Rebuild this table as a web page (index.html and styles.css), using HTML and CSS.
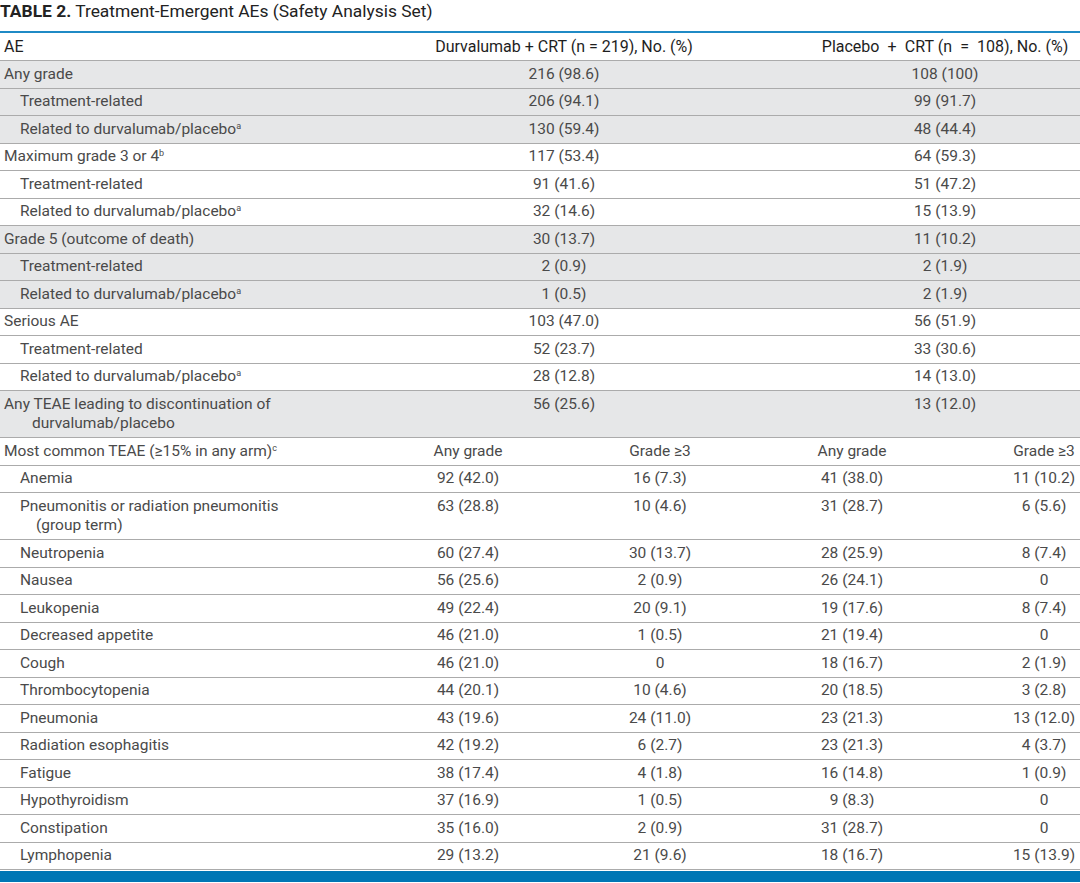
FILE: index.html
```html
<!DOCTYPE html>
<html lang="en">
<head>
<meta charset="utf-8">
<title>Treatment-Emergent AEs</title>
<link rel="stylesheet" href="styles.css">
</head>
<body>
<div class="page">
  <div class="caption"><span class="cap-label">TABLE 2.</span> Treatment-Emergent AEs (Safety Analysis Set)</div>
  <table class="ae-table">
    <colgroup>
      <col class="c-label">
      <col class="c-d1">
      <col class="c-d2">
      <col class="c-p1">
      <col class="c-p2">
    </colgroup>
    <thead>
      <tr>
        <th class="lbl">AE</th>
        <th colspan="2" class="num">Durvalumab + CRT (n = 219), No. (%)</th>
        <th colspan="2" class="num span-p">Placebo&ensp;+&ensp;CRT (n&ensp;=&ensp;108), No. (%)</th>
      </tr>
    </thead>
    <tbody>
      <tr class="shade">
        <td class="lbl">Any grade</td>
        <td colspan="2" class="num">216 (98.6)</td>
        <td colspan="2" class="num span-p">108 (100)</td>
      </tr>
      <tr class="shade">
        <td class="lbl ind">Treatment-related</td>
        <td colspan="2" class="num">206 (94.1)</td>
        <td colspan="2" class="num span-p">99 (91.7)</td>
      </tr>
      <tr class="shade">
        <td class="lbl ind">Related to durvalumab/placebo<sup>a</sup></td>
        <td colspan="2" class="num">130 (59.4)</td>
        <td colspan="2" class="num span-p">48 (44.4)</td>
      </tr>
      <tr>
        <td class="lbl">Maximum grade 3 or 4<sup>b</sup></td>
        <td colspan="2" class="num">117 (53.4)</td>
        <td colspan="2" class="num span-p">64 (59.3)</td>
      </tr>
      <tr>
        <td class="lbl ind">Treatment-related</td>
        <td colspan="2" class="num">91 (41.6)</td>
        <td colspan="2" class="num span-p">51 (47.2)</td>
      </tr>
      <tr>
        <td class="lbl ind">Related to durvalumab/placebo<sup>a</sup></td>
        <td colspan="2" class="num">32 (14.6)</td>
        <td colspan="2" class="num span-p">15 (13.9)</td>
      </tr>
      <tr class="shade">
        <td class="lbl">Grade 5 (outcome of death)</td>
        <td colspan="2" class="num">30 (13.7)</td>
        <td colspan="2" class="num span-p">11 (10.2)</td>
      </tr>
      <tr class="shade">
        <td class="lbl ind">Treatment-related</td>
        <td colspan="2" class="num">2 (0.9)</td>
        <td colspan="2" class="num span-p">2 (1.9)</td>
      </tr>
      <tr class="shade">
        <td class="lbl ind">Related to durvalumab/placebo<sup>a</sup></td>
        <td colspan="2" class="num">1 (0.5)</td>
        <td colspan="2" class="num span-p">2 (1.9)</td>
      </tr>
      <tr>
        <td class="lbl">Serious AE</td>
        <td colspan="2" class="num">103 (47.0)</td>
        <td colspan="2" class="num span-p">56 (51.9)</td>
      </tr>
      <tr>
        <td class="lbl ind">Treatment-related</td>
        <td colspan="2" class="num">52 (23.7)</td>
        <td colspan="2" class="num span-p">33 (30.6)</td>
      </tr>
      <tr>
        <td class="lbl ind">Related to durvalumab/placebo<sup>a</sup></td>
        <td colspan="2" class="num">28 (12.8)</td>
        <td colspan="2" class="num span-p">14 (13.0)</td>
      </tr>
      <tr class="shade">
        <td class="lbl hang">Any TEAE leading to discontinuation of <span class="nw">durvalumab/placebo</span></td>
        <td colspan="2" class="num">56 (25.6)</td>
        <td colspan="2" class="num span-p">13 (12.0)</td>
      </tr>
      <tr>
        <td class="lbl">Most common TEAE (≥15% in any arm)<sup>c</sup></td>
        <td class="num">Any grade</td>
        <td class="num">Grade ≥3</td>
        <td class="num">Any grade</td>
        <td class="num last">Grade ≥3</td>
      </tr>
      <tr>
        <td class="lbl ind">Anemia</td>
        <td class="num">92 (42.0)</td>
        <td class="num">16 (7.3)</td>
        <td class="num">41 (38.0)</td>
        <td class="num last">11 (10.2)</td>
      </tr>
      <tr>
        <td class="lbl hang-ind">Pneumonitis or radiation pneumonitis <span class="nw">(group term)</span></td>
        <td class="num">63 (28.8)</td>
        <td class="num">10 (4.6)</td>
        <td class="num">31 (28.7)</td>
        <td class="num last">6 (5.6)</td>
      </tr>
      <tr>
        <td class="lbl ind">Neutropenia</td>
        <td class="num">60 (27.4)</td>
        <td class="num">30 (13.7)</td>
        <td class="num">28 (25.9)</td>
        <td class="num last">8 (7.4)</td>
      </tr>
      <tr>
        <td class="lbl ind">Nausea</td>
        <td class="num">56 (25.6)</td>
        <td class="num">2 (0.9)</td>
        <td class="num">26 (24.1)</td>
        <td class="num last">0</td>
      </tr>
      <tr>
        <td class="lbl ind">Leukopenia</td>
        <td class="num">49 (22.4)</td>
        <td class="num">20 (9.1)</td>
        <td class="num">19 (17.6)</td>
        <td class="num last">8 (7.4)</td>
      </tr>
      <tr>
        <td class="lbl ind">Decreased appetite</td>
        <td class="num">46 (21.0)</td>
        <td class="num">1 (0.5)</td>
        <td class="num">21 (19.4)</td>
        <td class="num last">0</td>
      </tr>
      <tr>
        <td class="lbl ind">Cough</td>
        <td class="num">46 (21.0)</td>
        <td class="num">0</td>
        <td class="num">18 (16.7)</td>
        <td class="num last">2 (1.9)</td>
      </tr>
      <tr>
        <td class="lbl ind">Thrombocytopenia</td>
        <td class="num">44 (20.1)</td>
        <td class="num">10 (4.6)</td>
        <td class="num">20 (18.5)</td>
        <td class="num last">3 (2.8)</td>
      </tr>
      <tr>
        <td class="lbl ind">Pneumonia</td>
        <td class="num">43 (19.6)</td>
        <td class="num">24 (11.0)</td>
        <td class="num">23 (21.3)</td>
        <td class="num last">13 (12.0)</td>
      </tr>
      <tr>
        <td class="lbl ind">Radiation esophagitis</td>
        <td class="num">42 (19.2)</td>
        <td class="num">6 (2.7)</td>
        <td class="num">23 (21.3)</td>
        <td class="num last">4 (3.7)</td>
      </tr>
      <tr>
        <td class="lbl ind">Fatigue</td>
        <td class="num">38 (17.4)</td>
        <td class="num">4 (1.8)</td>
        <td class="num">16 (14.8)</td>
        <td class="num last">1 (0.9)</td>
      </tr>
      <tr>
        <td class="lbl ind">Hypothyroidism</td>
        <td class="num">37 (16.9)</td>
        <td class="num">1 (0.5)</td>
        <td class="num">9 (8.3)</td>
        <td class="num last">0</td>
      </tr>
      <tr>
        <td class="lbl ind">Constipation</td>
        <td class="num">35 (16.0)</td>
        <td class="num">2 (0.9)</td>
        <td class="num">31 (28.7)</td>
        <td class="num last">0</td>
      </tr>
      <tr>
        <td class="lbl ind">Lymphopenia</td>
        <td class="num">29 (13.2)</td>
        <td class="num">21 (9.6)</td>
        <td class="num">18 (16.7)</td>
        <td class="num last">15 (13.9)</td>
      </tr>
    </tbody>
  </table>
  <div class="footer-bar"></div>
</div>
</body>
</html>
```

FILE: styles.css
```css
html, body {
  margin: 0;
  padding: 0;
  background: #ffffff;
}

.page {
  width: 1080px;
  font-family: Roboto, "Liberation Sans", Arial, sans-serif;
  color: #3c3c3c;
}

.caption {
  font-size: 17.4px;
  line-height: 21px;
  padding: 1px 0 9px 0;
  color: #222222;
}

.cap-label {
  font-weight: 700;
}

.ae-table {
  width: 1080px;
  table-layout: fixed;
  border-collapse: collapse;
  border-top: 2px solid #1f8ac5;
  font-size: 15.5px;
  line-height: 19.5px;
}

.c-label { width: 372px; }
.c-d1 { width: 192px; }
.c-d2 { width: 192px; }
.c-p1 { width: 192px; }
.c-p2 { width: 132px; }

.ae-table th,
.ae-table td {
  padding: 3.5px 4px;
  border-bottom: 1px solid #ababab;
  vertical-align: top;
  font-weight: 400;
}

.ae-table th {
  color: #1e1e1e;
  font-size: 16px;
  padding-top: 4px;
}

.ae-table td {
  color: #4a4a4a;
}

.ae-table .lbl {
  text-align: left;
}

.ae-table .num {
  text-align: center;
}

.ae-table .span-p {
  padding-left: 58px;
}

.ae-table .last {
  padding-left: 64px;
}

.ae-table .ind {
  padding-left: 20px;
}

.ae-table .hang {
  padding-left: 32px;
  text-indent: -28px;
}

.ae-table .hang-ind {
  padding-left: 36px;
  padding-right: 30px;
  text-indent: -16px;
}

.nw {
  white-space: nowrap;
}

.shade td {
  background: #e6e7e8;
}

sup {
  font-size: 9px;
  line-height: 0;
  vertical-align: 5px;
}

.footer-bar {
  height: 11px;
  background: #0077b5;
  margin-top: 1px;
}
```
